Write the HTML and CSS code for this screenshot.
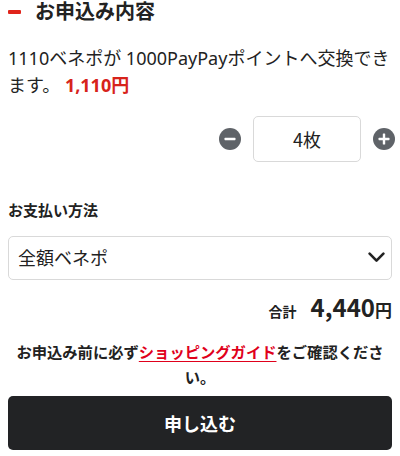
FILE: index.html
```html
<!DOCTYPE html>
<html lang="ja">
<head>
<meta charset="utf-8">
<link rel="stylesheet" href="styles.css">
</head>
<body>
<div class="page">
  <h2 class="heading"><span class="dash"></span>お申込み内容</h2>
  <p class="desc">1110ベネポが 1000PayPayポイントへ交換できます。 <span class="price">1,110円</span></p>
  <div class="qty">
    <button class="circle" aria-label="minus">
      <svg width="22" height="22" viewBox="0 0 22 22"><circle cx="11" cy="11" r="11" fill="#5f6368"/><rect x="5.5" y="9.8" width="11" height="2.4" rx="0.6" fill="#fff"/></svg>
    </button>
    <div class="qty-box">4枚</div>
    <button class="circle" aria-label="plus">
      <svg width="22" height="22" viewBox="0 0 22 22"><circle cx="11" cy="11" r="11" fill="#5f6368"/><rect x="5.5" y="9.8" width="11" height="2.4" rx="0.6" fill="#fff"/><rect x="9.8" y="5.5" width="2.4" height="11" rx="0.6" fill="#fff"/></svg>
    </button>
  </div>
  <h3 class="label">お支払い方法</h3>
  <div class="select">
    <span>全額ベネポ</span>
    <svg width="17" height="11" viewBox="0 0 17 11"><path d="M1.6 1.6 L8.5 8.6 L15.4 1.6" fill="none" stroke="#222" stroke-width="2.6" stroke-linecap="round" stroke-linejoin="round"/></svg>
  </div>
  <div class="total"><span class="total-label">合計</span><span class="total-num">4,440</span><span class="yen">円</span></div>
  <p class="notice">お申込み前に必ず<a href="#" class="link">ショッピングガイド</a>をご確認ください。</p>
  <button class="submit">申し込む</button>
</div>
</body>
</html>
```
FILE: styles.css
```css
* { box-sizing: border-box; }
html, body { margin: 0; padding: 0; background: #fff; }
body {
  font-family: "Noto Sans CJK JP", "Noto Sans", sans-serif;
  color: #222;
  width: 400px;
  height: 456px;
  overflow: hidden;
}
.page { padding: 0 8px; }
.heading {
  margin: 0;
  display: flex;
  align-items: center;
  font-size: 20px;
  font-weight: 700;
  line-height: 22px;
  height: 22px;
}
.dash {
  display: inline-block;
  width: 13px;
  height: 4px;
  background: #e0241b;
  border-radius: 1px;
  margin: 2px 14px 0 0;
}
.desc {
  margin: 23px 0 0;
  font-family: "Noto Sans", "Noto Sans CJK JP", sans-serif;
  font-size: 18px;
  line-height: 27px;
}
.price { color: #d7231b; font-weight: 700; }
.qty {
  display: flex;
  justify-content: flex-end;
  align-items: center;
  gap: 12px;
  margin: 17px -3px 0 0;
}
.circle {
  border: 0;
  padding: 0;
  background: none;
  width: 22px;
  height: 22px;
  display: block;
}
.circle svg { display: block; }
.qty-box {
  width: 108px;
  height: 46px;
  border: 1px solid #d9d9d9;
  border-radius: 5px;
  display: flex;
  align-items: center;
  justify-content: center;
  font-size: 18px;
}
.label {
  margin: 36px 0 0;
  font-size: 15px;
  font-weight: 700;
  line-height: 24px;
}
.select {
  margin-top: 14px;
  height: 44px;
  border: 1px solid #d9d9d9;
  border-radius: 5px;
  display: flex;
  align-items: center;
  justify-content: space-between;
  padding: 0 6px 2px 9px;
  font-size: 18px;
}
.select svg { display: block; }
.total {
  display: flex;
  justify-content: flex-end;
  align-items: baseline;
  margin-top: 13px;
  line-height: 28px;
  height: 28px;
}
.total-label { font-size: 14px; font-weight: 700; margin-right: 14px; }
.total-num { font-size: 24px; font-weight: 700; }
.yen { font-size: 17px; font-weight: 700; }
.notice {
  margin: 18px 0 0;
  text-align: center;
  font-size: 15.3px;
  font-weight: 700;
  line-height: 25px;
}
.link { color: #e0001b; text-decoration: underline; text-underline-offset: 3px; }
.submit {
  display: block;
  width: 100%;
  margin-top: 7px;
  height: 54px;
  border: 0;
  border-radius: 5px;
  background: #222325;
  color: #fff;
  font-family: inherit;
  font-size: 18px;
  font-weight: 700;
  line-height: 1;
}
```
